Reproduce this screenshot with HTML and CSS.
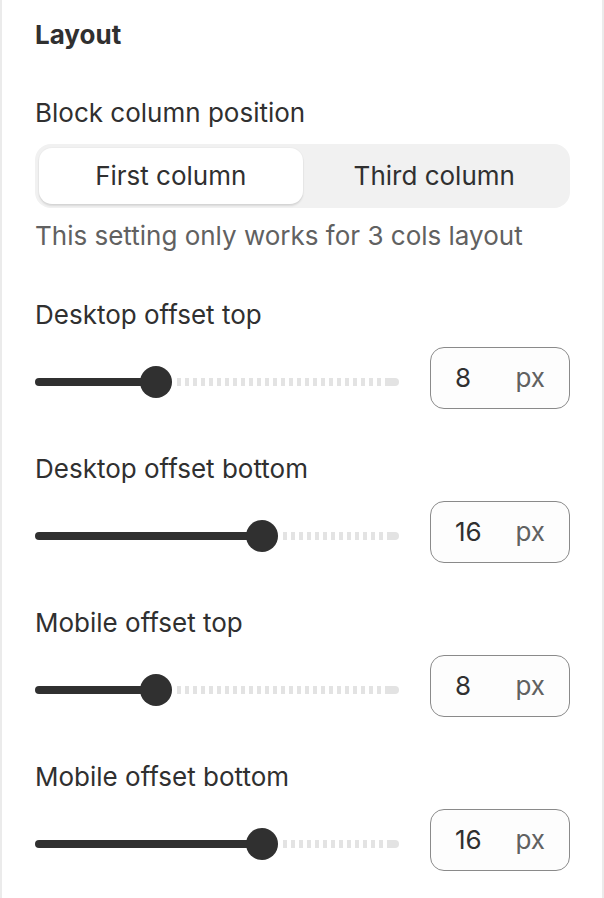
FILE: index.html
```html
<!DOCTYPE html>
<html>
<head>
<meta charset="utf-8">
<link rel="stylesheet" href="styles.css">
</head>
<body>
<div class="card">
  <h2 class="title">Layout</h2>

  <div class="field">
    <div class="label">Block column position</div>
    <div class="segmented">
      <div class="seg seg-active">First column</div>
      <div class="seg">Third column</div>
    </div>
    <div class="help">This setting only works for 3 cols layout</div>
  </div>

  <div class="field range-field">
    <div class="label">Desktop offset top</div>
    <div class="range-row">
      <div class="slider">
        <div class="fill" style="width:121px"></div>
        <div class="thumb"></div>
        <div class="rest"></div>
        <div class="rest-end"></div>
      </div>
      <div class="num"><span class="val">8</span><span class="unit">px</span></div>
    </div>
  </div>

  <div class="field range-field">
    <div class="label">Desktop offset bottom</div>
    <div class="range-row">
      <div class="slider">
        <div class="fill" style="width:227px"></div>
        <div class="thumb"></div>
        <div class="rest"></div>
        <div class="rest-end"></div>
      </div>
      <div class="num"><span class="val">16</span><span class="unit">px</span></div>
    </div>
  </div>

  <div class="field range-field">
    <div class="label">Mobile offset top</div>
    <div class="range-row">
      <div class="slider">
        <div class="fill" style="width:121px"></div>
        <div class="thumb"></div>
        <div class="rest"></div>
        <div class="rest-end"></div>
      </div>
      <div class="num"><span class="val">8</span><span class="unit">px</span></div>
    </div>
  </div>

  <div class="field range-field">
    <div class="label">Mobile offset bottom</div>
    <div class="range-row">
      <div class="slider">
        <div class="fill" style="width:227px"></div>
        <div class="thumb"></div>
        <div class="rest"></div>
        <div class="rest-end"></div>
      </div>
      <div class="num"><span class="val">16</span><span class="unit">px</span></div>
    </div>
  </div>
</div>
</body>
</html>
```

FILE: styles.css
```css
html, body {
  margin: 0;
  padding: 0;
}
body {
  background: #ebebeb;
  font-family: Inter, "Noto Sans", sans-serif;
  color: #303030;
  font-size: 26px;
  line-height: 40px;
}
.card {
  background: #ffffff;
  margin: 0 2px;
  min-height: 898px;
  padding: 15px 32px 0 33px;
  box-sizing: border-box;
}
.title {
  margin: 0;
  font-size: 26px;
  line-height: 40px;
  font-weight: 650;
}
.field {
  margin-top: 38px;
}
.label {
  line-height: 40px;
}
.segmented {
  margin-top: 11px;
  display: grid;
  grid-template-columns: 1fr 1fr;
  padding: 4px;
  background: #f1f1f1;
  border-radius: 16px;
}
.seg {
  height: 56px;
  display: flex;
  align-items: center;
  justify-content: center;
  border-radius: 13px;
}
.seg-active {
  background: #ffffff;
  box-shadow: 0 2px 2px rgba(0, 0, 0, 0.1), 0 0 0 1px rgba(0, 0, 0, 0.02);
}
.help {
  margin-top: 8px;
  color: #616161;
}
.range-field {
  margin-top: 39px;
}
.range-field + .range-field {
  margin-top: 40px;
}
.range-row {
  margin-top: 12px;
  display: flex;
  align-items: center;
  gap: 31px;
}
.slider {
  width: 364px;
  height: 62px;
  display: flex;
  align-items: center;
  padding-top: 8px;
  box-sizing: border-box;
}
.fill {
  height: 8px;
  background: #303030;
  border-radius: 4px 0 0 4px;
  flex: none;
}
.thumb {
  width: 32px;
  height: 32px;
  border-radius: 50%;
  background: #303030;
  margin: 0 -16px;
  flex: none;
  position: relative;
}
.rest {
  flex: 1;
  height: 8px;
  margin-left: 21px;
  background: repeating-linear-gradient(to right, #e3e3e3 0 4px, transparent 4px 8px);
}
.rest-end {
  width: 11px;
  height: 8px;
  background: #e3e3e3;
  border-radius: 0 4px 4px 0;
  flex: none;
}
.num {
  width: 140px;
  height: 62px;
  box-sizing: border-box;
  border: 1px solid #8a8a8a;
  border-radius: 14px;
  background: #fdfdfd;
  display: flex;
  align-items: center;
  justify-content: space-between;
  padding: 0 24px;
}
.val {
  color: #303030;
}
.unit {
  color: #616161;
}
```
